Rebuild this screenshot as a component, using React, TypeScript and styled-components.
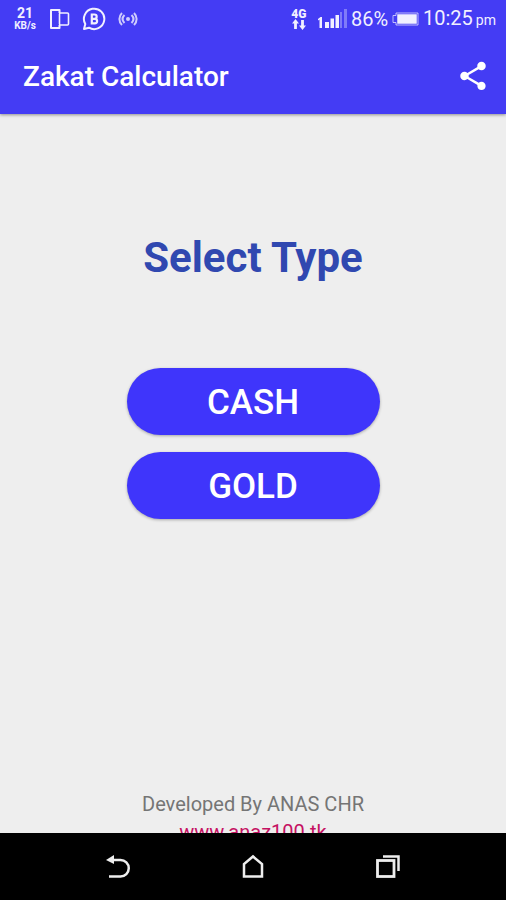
import React from "react";
import styled, { createGlobalStyle } from "styled-components";

const GlobalStyle = createGlobalStyle`
  * { box-sizing: border-box; }
  body { margin: 0; background: #eeeeee; font-family: Roboto, "Liberation Sans", sans-serif; }
`;

const Screen = styled.div`
  display: flex;
  flex-direction: column;
  height: 100vh;
  background: #eeeeee;
`;

const StatusBar = styled.div`
  display: flex;
  justify-content: space-between;
  align-items: center;
  flex: none;
  height: 38px;
  padding: 0 10px 0 13px;
  background: #443cf4;
  color: #f1f0ff;
  z-index: 2;
`;

const StatusGroup = styled.div<{ $gap: number }>`
  display: flex;
  align-items: center;
  gap: ${({ $gap }) => $gap}px;
`;

const Speed = styled.div`
  display: flex;
  flex-direction: column;
  align-items: center;
  width: 24px;
  font-size: 10px;
  line-height: 12px;
  font-weight: 700;
`;

const SpeedValue = styled.span`
  font-size: 14px;
  line-height: 14px;
`;

const Network = styled.div`
  display: flex;
  flex-direction: column;
  align-items: center;
  width: 18px;
  margin-right: 6px;
  font-size: 12px;
  font-weight: 900;
  line-height: 10px;
`;

const StatusText = styled.span`
  font-size: 20px;
  line-height: 24px;
`;

const Period = styled.small`
  margin-left: 3px;
  font-size: 14px;
`;

const AppBar = styled.header`
  display: flex;
  align-items: center;
  justify-content: space-between;
  flex: none;
  height: 76px;
  padding: 0 16px 0 23px;
  background: #443cf4;
  color: #ffffff;
  box-shadow: 0 1px 3px rgba(0, 0, 0, 0.4);
  z-index: 1;
`;

const AppTitle = styled.h1`
  margin: 0;
  padding-top: 2px;
  font-size: 28px;
  font-weight: 500;
  line-height: 36px;
`;

const IconButton = styled.button`
  display: flex;
  align-items: center;
  justify-content: center;
  padding: 0;
  border: 0;
  background: none;
  color: inherit;
  cursor: pointer;
`;

const Content = styled.main`
  display: flex;
  flex-direction: column;
  align-items: center;
  flex: 1;
  min-height: 0;
  overflow: hidden;
  padding-top: 119px;
`;

const Heading = styled.h2`
  margin: 0 0 85px;
  color: #3048b0;
  font-size: 42px;
  font-weight: 700;
  line-height: 50px;
`;

const Choices = styled.div`
  display: flex;
  flex-direction: column;
  gap: 17px;
  width: 50%;
`;

const ChoiceButton = styled.button`
  height: 67px;
  padding: 2px 0 0;
  border: 0;
  border-radius: 34px;
  background: #3f35fb;
  color: #ffffff;
  font-family: inherit;
  font-size: 35px;
  font-weight: 500;
  line-height: 40px;
  box-shadow: 0 1px 3px rgba(0, 0, 0, 0.3);
  cursor: pointer;
`;

const Credits = styled.footer`
  display: flex;
  flex-direction: column;
  align-items: center;
  margin-top: auto;
  margin-bottom: -13px;
  color: #757575;
  font-size: 20px;
  line-height: 28px;
`;

const SiteLink = styled.a`
  color: #c51162;
  text-decoration: underline;
`;

const NavBar = styled.nav`
  display: flex;
  align-items: center;
  justify-content: center;
  gap: 107px;
  flex: none;
  height: 67px;
  background: #000000;
  color: #eeeeee;
`;

function App() {
  return (
    <Screen>
      <GlobalStyle />
      <StatusBar>
        <StatusGroup $gap={12}>
          <Speed>
            <SpeedValue>21</SpeedValue>
            <span>KB/s</span>
          </Speed>
          <svg width="21" height="22" viewBox="0 0 21 22" fill="none" stroke="currentColor" strokeWidth="2">
            <path d="M10.500 5V2H2v18h8.500v-3" strokeLinejoin="round" />
            <rect x="10.500" y="5" width="9" height="12" rx="1" strokeWidth="1.600" />
          </svg>
          <svg width="24" height="24" viewBox="0 0 24 24" fill="none" stroke="currentColor" strokeWidth="2">
            <path d="M2 22l1.300-5A10.200 10.200 0 1 1 7 20.700Z" strokeLinejoin="round" />
            <path d="M9.800 7.500h2.700a2.100 2.100 0 0 1 0 4.300H9.800m0 0h3a2.300 2.300 0 0 1 0 4.600h-3zM9.800 6.500v10.900" strokeWidth="2.200" />
          </svg>
          <svg width="20" height="14" viewBox="0 0 20 14" fill="none" stroke="currentColor" opacity="0.8">
            <path d="M4 1C.5 4.500.5 9.500 4 13M16 1c3.500 3.500 3.500 8.500 0 12" strokeWidth="2" />
            <path d="M6.500 3c-2.500 2.500-2.500 5.500 0 8M13.500 3c2.500 2.500 2.500 5.500 0 8" strokeWidth="2" />
            <circle cx="10" cy="7" r="2" fill="currentColor" stroke="none" />
          </svg>
        </StatusGroup>
        <StatusGroup $gap={4}>
          <Network>
            <span>4G</span>
            <svg width="14" height="11" viewBox="0 0 14 11" fill="currentColor">
              <path d="M3.500 0 7 4.500H4.900V10H2.100V4.500H0zM10.500 11 7 6.500h2.100V1h2.800v5.500H14z" />
            </svg>
          </Network>
          <svg width="29" height="20" viewBox="0 0 29 20" fill="currentColor">
            <path d="M0 10l2.500-2H4v11H1.500v-8.500L0 11.500zM7 13h4v6H7zM12.500 9.500h3.500V19h-3.500zM17.500 6H21v13h-3.500z" />
            <path d="M22 3h2v16h-2zM26 0h3v19h-3z" opacity="0.35" />
          </svg>
          <StatusText>86%</StatusText>
          <svg width="27" height="14" viewBox="0 0 27 14" fill="none" stroke="currentColor">
            <path d="M4 1h22v12H4v-2.500H1v-7h3z" opacity="0.7" />
            <path d="M6 3h18v8H6z" fill="currentColor" strokeWidth="1.500" />
          </svg>
          <StatusText>
            10:25<Period>pm</Period>
          </StatusText>
        </StatusGroup>
      </StatusBar>
      <AppBar>
        <AppTitle>Zakat Calculator</AppTitle>
        <IconButton aria-label="Share">
          <svg width="34" height="34" viewBox="0 0 24 24" fill="currentColor">
            <path d="M18 16.080c-.76 0-1.440.3-1.960.77L8.910 12.700c.05-.23.09-.46.09-.7s-.04-.47-.09-.7l7.050-4.110c.54.5 1.250.81 2.040.81 1.660 0 3-1.340 3-3s-1.340-3-3-3-3 1.340-3 3c0 .24.04.47.09.7L8.040 9.810C7.500 9.310 6.790 9 6 9c-1.660 0-3 1.340-3 3s1.340 3 3 3c.79 0 1.500-.31 2.040-.81l7.120 4.160c-.05.21-.08.43-.08.65 0 1.610 1.310 2.920 2.920 2.920s2.920-1.310 2.920-2.920-1.310-2.920-2.920-2.920z" />
          </svg>
        </IconButton>
      </AppBar>
      <Content>
        <Heading>Select Type</Heading>
        <Choices>
          <ChoiceButton>CASH</ChoiceButton>
          <ChoiceButton>GOLD</ChoiceButton>
        </Choices>
        <Credits>
          <span>Developed By ANAS CHR</span>
          <SiteLink href="#site">www.anaz100.tk</SiteLink>
        </Credits>
      </Content>
      <NavBar aria-label="System">
        <IconButton aria-label="Back">
          <svg width="28" height="26" viewBox="0 0 28 26">
            <path d="M7 6h9.500a8 8 0 0 1 0 16.500H5" fill="none" stroke="currentColor" strokeWidth="2.500" />
            <path d="M2 6l8-5v9z" fill="currentColor" />
          </svg>
        </IconButton>
        <IconButton aria-label="Home">
          <svg width="28" height="26" viewBox="0 0 28 26" fill="none" stroke="currentColor" strokeWidth="2.500">
            <path d="M5 22.500V10l9-7.500L23 10v12.500z" />
          </svg>
        </IconButton>
        <IconButton aria-label="Recent apps">
          <svg width="28" height="26" viewBox="0 0 28 26" fill="none" stroke="currentColor">
            <rect x="3.500" y="6.500" width="16.500" height="16" strokeWidth="2.800" />
            <path d="M9 2.500h15.500V17" strokeWidth="2.500" />
          </svg>
        </IconButton>
      </NavBar>
    </Screen>
  );
}

export default App;
